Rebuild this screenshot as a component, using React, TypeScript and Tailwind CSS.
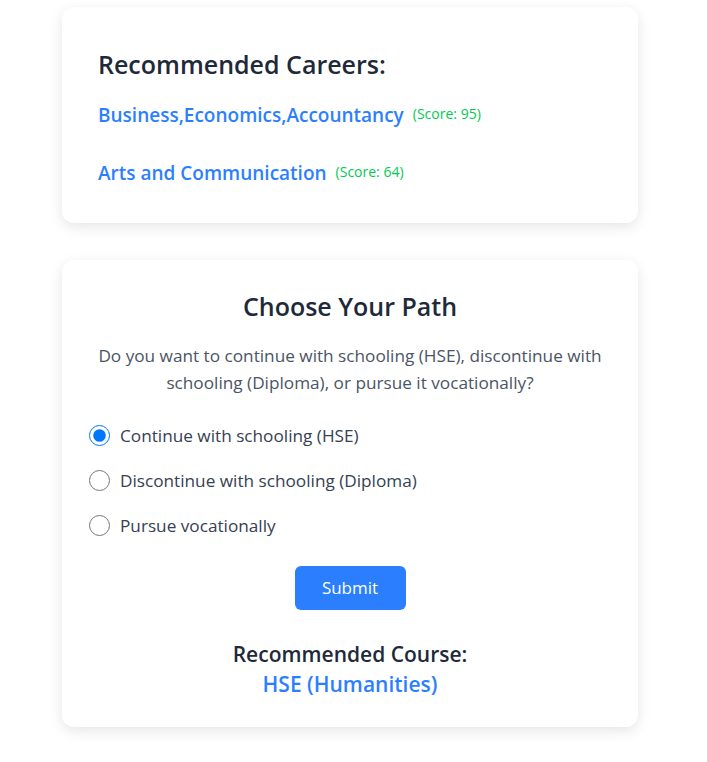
import React from "react";

export default function App() {
  const careers = [
    { name: "Business,Economics,Accountancy", score: 95 },
    { name: "Arts and Communication", score: 64 },
  ];
  const options = [
    { label: "Continue with schooling (HSE)", checked: true },
    { label: "Discontinue with schooling (Diploma)", checked: false },
    { label: "Pursue vocationally", checked: false },
  ];
  return (
    <div className="min-h-screen bg-white flex flex-col items-center pt-[7px] pr-[7px] pb-[35px] font-['Segoe_UI','Open_Sans',sans-serif]">
      <div className="w-[576px] rounded-xl bg-white shadow-[0_4px_14px_rgba(0,0,0,0.10)] pl-9 pr-9 pt-[41px] pb-[36px]">
        <h2 className="text-[25px] leading-8 font-semibold text-gray-800">Recommended Careers:</h2>
        <div className="mt-[21px] flex flex-col gap-[30px]">
          {careers.map((c) => (
            <div key={c.name} className="flex items-center gap-[9px]">
              <span className="text-[19px] leading-7 font-semibold text-blue-500">{c.name}</span>
              <span className="text-[14px] leading-5 text-green-500 -mt-[2px]">(Score: {c.score})</span>
            </div>
          ))}
        </div>
      </div>

      <div className="mt-[37px] w-[576px] rounded-xl bg-white shadow-[0_4px_14px_rgba(0,0,0,0.10)] px-[27px] pt-[30px] pb-[27px]">
        <h2 className="text-center text-[25px] leading-8 font-semibold text-gray-800">Choose Your Path</h2>
        <p className="mt-5 text-center text-[17.2px] leading-[27px] text-gray-600">
          Do you want to continue with schooling (HSE), discontinue with schooling (Diploma), or pursue it vocationally?
        </p>
        <div className="mt-[26px] flex flex-col gap-[18px]">
          {options.map((o) => (
            <label key={o.label} className="flex items-center gap-[10px] h-[27px]">
              <input
                type="radio"
                name="path"
                defaultChecked={o.checked}
                className="w-[21px] h-[21px] m-0"
              />
              <span className="text-[17.2px] text-gray-700">{o.label}</span>
            </label>
          ))}
        </div>
        <div className="mt-[27px] flex justify-center">
          <button className="w-[111px] h-[44px] rounded-md bg-blue-500 text-white text-[17px]">Submit</button>
        </div>
        <div className="mt-[29px] text-center">
          <div className="text-[21px] leading-[30px] font-semibold text-gray-800">Recommended Course:</div>
          <div className="text-[21px] leading-[31px] font-semibold text-blue-500">HSE (Humanities)</div>
        </div>
      </div>
    </div>
  );
}
